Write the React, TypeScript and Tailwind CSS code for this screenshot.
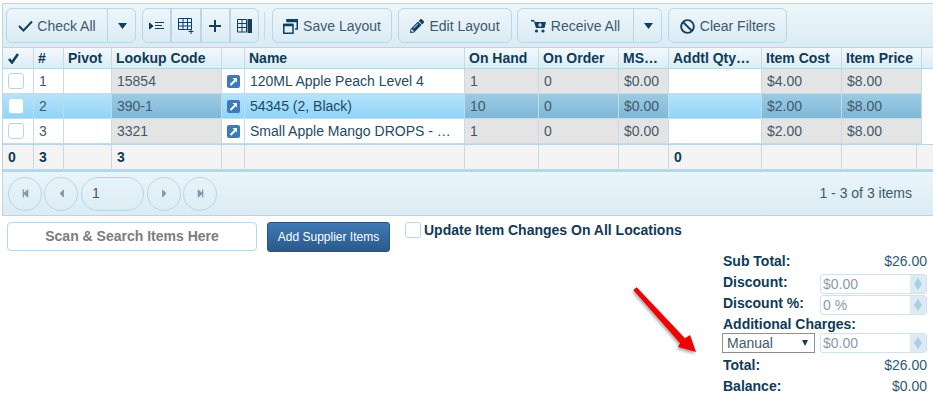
import React from "react";
import { FaPencilAlt, FaBan, FaStepBackward, FaStepForward, FaCaretLeft, FaCaretRight } from "react-icons/fa";

const cols = "grid-cols-[31px_30px_48px_110px_23px_220px_74px_80px_50px_93px_80px_80px_1fr]";
const grayIdx = [3, 6, 7, 8, 10, 11];

const rows = [
  { c: ["", "1", "", "15854", "", "120ML Apple Peach Level 4", "1", "0", "$0.00", "", "$4.00", "$8.00"], sel: false },
  { c: ["", "2", "", "390-1", "", "54345 (2, Black)", "10", "0", "$0.00", "", "$2.00", "$8.00"], sel: true },
  { c: ["", "3", "", "3321", "", "Small Apple Mango DROPS - …", "1", "0", "$0.00", "", "$2.00", "$8.00"], sel: false },
];

const headers = ["", "#", "Pivot", "Lookup Code", "", "Name", "On Hand", "On Order", "MS…", "Addtl Qty…", "Item Cost", "Item Price"];

function BarBtn({ children, className = "" }: { children: React.ReactNode; className?: string }) {
  return (
    <div className={`h-[35px] flex items-center justify-center gap-[5px] border border-[#b5d7e8] bg-gradient-to-b from-[#edf6fb] to-[#dcebf4] rounded-[6px] text-[#3d5a6c] ${className}`}>
      {children}
    </div>
  );
}

function Caret() {
  return (
    <svg width="9" height="6" viewBox="0 0 9 6"><path d="M0 0 H9 L4.5 6 Z" fill="#123f5d" /></svg>
  );
}

function LinkIcon() {
  return (
    <svg width="13" height="13" viewBox="0 0 13 13">
      <rect width="13" height="13" rx="2" fill="#3f7ab8" />
      <path d="M3.5 10 L8 5.5" stroke="#fff" strokeWidth="2" />
      <path d="M5.5 3 H10 V7.5 Z" fill="#fff" />
    </svg>
  );
}

function Spin({ value }: { value: string }) {
  return (
    <div className="w-[107px] h-[20px] flex border border-[#cfe3ee] rounded-[3px] bg-white font-normal">
      <div className="flex-1 pl-[2px] leading-[18px] text-[#8b9ba6]">{value}</div>
      <div className="w-[16px] bg-[#dcebf4] flex items-center justify-center">
        <svg width="8" height="12" viewBox="0 0 8 12"><path d="M4 0 L8 6 L4 12 L0 6 Z" fill="#a9cfe3" /></svg>
      </div>
    </div>
  );
}

function Pager({ children, wide }: { children: React.ReactNode; wide?: boolean }) {
  return (
    <div className={`h-[34px] rounded-[17px] border border-[#b5d7e8] flex items-center ${wide ? "w-[63px] mx-[1px] justify-start pl-[10px] text-[#3d5a6c]" : "w-[34px] justify-center text-[#7f9bab]"}`}>
      {children}
    </div>
  );
}

function SumRow({ label, value, cls }: { label: string; value: string; cls: string }) {
  return (
    <div className={`flex justify-between font-bold pl-[1px] ${cls}`}>
      <span className="text-[#0f3b58]">{label}</span>
      <span className="font-normal text-[#2f5a73]">{value}</span>
    </div>
  );
}

export default function App() {
  return (
    <div className="relative w-[933px] h-[402px] overflow-hidden bg-white text-[14px] font-['Liberation_Sans',Arial,sans-serif] text-[#3d5a6c]">
      <div className="ml-[2px] mt-[3px] w-[931px] border border-[#b5d7e8] border-r-0">
        <div className="h-[44px] pt-[4px] pl-[3px] flex bg-gradient-to-b from-[#ecf6fb] to-[#dcebf4] border-b border-[#b5d7e8]">
          <BarBtn className="w-[130px] !justify-start">
            <div className="w-[101px] h-full pt-[1px] flex items-center justify-center gap-[4px] border-r border-[#b5d7e8]">
              <svg width="15" height="12" viewBox="0 0 15 12" fill="none" stroke="#123f5d" strokeWidth="2">
                <path d="M1 6 L5.5 10.5 L14 1.5" />
              </svg>
              <span>Check All</span>
            </div>
            <div className="flex-1 flex justify-center -ml-[3px]"><Caret /></div>
          </BarBtn>
          <BarBtn className="ml-[6px] w-[117px] !gap-0 overflow-hidden">
            <div className="flex-1 h-full flex items-center justify-center border-r-2 border-[#b5d7e8]">
              <svg width="16" height="12" viewBox="0 0 16 12" fill="none" stroke="#123f5d" strokeWidth="1">
                <path d="M0.5 3 L4 6 L0.5 9 Z" fill="#123f5d" />
                <path d="M6 2.5 H15 M6 5.5 H13 M6 8.5 H15" />
              </svg>
            </div>
            <div className="flex-1 h-full flex items-center justify-center border-r-2 border-[#b5d7e8]">
              <svg width="16" height="16" viewBox="0 0 16 16" fill="none" stroke="#123f5d" strokeWidth="1">
                <path d="M0.5 0.5 H13.5 V11.5 H0.5 Z M0.5 4.5 H13.5 M0.5 8 H13.5 M5 0.5 V11.5 M9.5 0.5 V11.5" />
                <path d="M13 11 V16 M10.5 13.5 H15.5" />
              </svg>
            </div>
            <div className="flex-1 h-full flex items-center justify-center border-r-2 border-[#b5d7e8]">
              <svg width="12" height="12" viewBox="0 0 12 12"><path d="M5 0 H7 V5 H12 V7 H7 V12 H5 V7 H0 V5 H5 Z" fill="#123f5d" /></svg>
            </div>
            <div className="flex-1 h-full flex items-center justify-center">
              <svg width="15" height="14" viewBox="0 0 15 14" fill="none" stroke="#123f5d" strokeWidth="1">
                <path d="M0.5 0.5 H9.5 V13 H0.5 Z M0.5 4.5 H9.5 M0.5 8.5 H9.5 M5 0.5 V13" />
                <rect x="10.5" y="0" width="4.5" height="14" fill="#123f5d" stroke="none" />
              </svg>
            </div>
          </BarBtn>
          <div className="ml-[5px] mt-[4px] w-px h-[27px] bg-[#c6dde9]" />
          <BarBtn className="ml-[7px] w-[120px] pt-[1px]">
            <svg width="15" height="15" viewBox="0 0 15 15" fill="none" stroke="#123f5d" strokeWidth="1.5">
              <path d="M0.75 5.5 H10 V14.25 H0.75 Z" />
              <path d="M4 3 V0.75 H14.25 V10 H12" />
              <path d="M0.75 6 H10" strokeWidth="2.5" />
              <path d="M4 2 H14.25" strokeWidth="2.5" />
            </svg>
            <span>Save Layout</span>
          </BarBtn>
          <BarBtn className="ml-[6px] w-[114px] pt-[1px]">
            <FaPencilAlt className="text-[#123f5d] text-[14px]" />
            <span>Edit Layout</span>
          </BarBtn>
          <BarBtn className="ml-[5px] w-[145px] !justify-start">
            <div className="w-[116px] h-full pt-[1px] flex items-center justify-center gap-[5px] border-r border-[#b5d7e8]">
              <svg width="15" height="14" viewBox="0 0 15 14">
                <path d="M0 1 H3 L4 3 H15 L13.5 9 H5 L3 2.5 H0 Z" fill="#123f5d" />
                <circle cx="5.5" cy="12" r="1.6" fill="#123f5d" />
                <circle cx="12" cy="12" r="1.6" fill="#123f5d" />
                <path d="M9 4 V8 M7 6 H11" stroke="#edf6fb" strokeWidth="1.2" />
              </svg>
              <span>Receive All</span>
            </div>
            <div className="flex-1 flex justify-center -ml-[3px]"><Caret /></div>
          </BarBtn>
          <BarBtn className="ml-[6px] w-[119px] pt-[1px]">
            <FaBan className="text-[#123f5d] text-[15px]" />
            <span>Clear Filters</span>
          </BarBtn>
        </div>

        <div className={`grid ${cols} h-[21px] bg-gradient-to-b from-[#f3f9fc] to-[#dcecf5] border-b border-[#b5d7e8]`}>
          {headers.map((h, i) => (
            <div key={i} className="border-r border-[#c3dcea] pl-[4px] font-bold text-[#0f3b58] leading-[20px] whitespace-nowrap overflow-hidden">
              {i === 0 ? (
                <svg className="mt-[5px] ml-[1px]" width="11" height="11" viewBox="0 0 11 11" fill="none" stroke="#123f5d" strokeWidth="2.6">
                  <path d="M1 6 L4 9.5 L10 1" />
                </svg>
              ) : (
                h
              )}
            </div>
          ))}
          <div />
        </div>

        {rows.map((r, ri) => (
          <div key={ri} className={`grid ${cols} h-[25px] ${r.sel ? "bg-gradient-to-b from-[#b5e3fa] to-[#8ed4f8]" : "bg-white"}`}>
            {r.c.map((v, i) => {
              const gray = grayIdx.includes(i);
              const bg = gray ? (r.sel ? "bg-gradient-to-b from-[#9ccbe3] to-[#7fb8d8]" : "bg-[#e4e4e4]") : "";
              return (
                <div key={i} className={`relative border-r border-[#c3dcea] border-b pl-[5px] leading-[24px] whitespace-nowrap overflow-hidden ${i === 5 ? "text-[#1e4a66]" : "text-[#44586a]"} ${bg}`}>
                  {i === 0 && (
                    <div className="absolute left-[5px] top-[4px] w-[16px] h-[16px] rounded-[3px] border border-[#b5d7e8] bg-white" />
                  )}
                  {i === 4 && (
                    <div className="h-full flex items-center justify-center pr-[4px] -ml-[1px]">
                      <LinkIcon />
                    </div>
                  )}
                  {v}
                </div>
              );
            })}
            <div className="bg-white" />
          </div>
        ))}

        <div className={`grid ${cols} h-[27px] bg-[#f4f4f4] border-t border-[#b5d7e8] border-b-2`}>
          {["0", "3", "", "3", "", "", "", "", "", "0", ""].map((v, i) => (
            <div key={i} className="border-r border-[#c3dcea] pl-[5px] font-bold text-[#0f3b58] leading-[25px]">{v}</div>
          ))}
          <div className="w-[75px] border-r border-[#c3dcea]" />
          <div />
        </div>

        <div className="h-[44px] pl-[5px] pr-[5px] flex items-center justify-between bg-gradient-to-b from-[#eaf5fb] to-[#dcebf4] border-t border-[#b5d7e8]">
          <div className="flex gap-[2px]">
            <Pager><FaStepBackward className="text-[9px]" /></Pager>
            <Pager><FaCaretLeft className="text-[13px]" /></Pager>
            <Pager wide>1</Pager>
            <Pager><FaCaretRight className="text-[13px]" /></Pager>
            <Pager><FaStepForward className="text-[9px]" /></Pager>
          </div>
          <div className="pr-[16px] text-[#3d5a6c]">1 - 3 of 3 items</div>
        </div>
      </div>

      <div className="flex pl-[7px] pt-[6px] h-[30px] items-start">
        <div className="w-[250px] h-[29px] shrink-0 rounded-[4px] border border-[#b5d7e8] flex items-center justify-center font-bold text-[#7c7c7c]">
          Scan &amp; Search Items Here
        </div>
        <div className="ml-[10px] w-[123px] h-[30px] shrink-0 rounded-[3px] border border-[#28557f] bg-gradient-to-b from-[#3f7ab5] to-[#2a5a8c] text-white text-[12px] flex items-center justify-center">
          Add Supplier Items
        </div>
        <div className="ml-[15px] w-[16px] h-[16px] shrink-0 rounded-[3px] border border-[#b5d7e8]" />
        <div className="ml-[3px] -mt-[1px] font-bold text-[#0f3b58] leading-[18px]">Update Item Changes On All Locations</div>
      </div>

      <div className="ml-[722px] w-[205px] mt-[5px]">
        <SumRow label="Sub Total:" value="$26.00" cls="h-[22px] leading-[21px]" />
        <div className="flex justify-between h-[21px] items-center font-bold">
          <span className="text-[#0f3b58] pl-[1px] -mt-[3px]">Discount:</span>
          <Spin value="$0.00" />
        </div>
        <div className="flex justify-between h-[21px] items-center font-bold">
          <span className="text-[#0f3b58] pl-[1px] -mt-[3px]">Discount %:</span>
          <Spin value="0 %" />
        </div>
        <div className="font-bold text-[#0f3b58] h-[17px] leading-[18px] pl-[1px]">Additional Charges:</div>
        <div className="flex justify-between h-[21px] items-center">
          <div className="w-[93px] h-[20px] border border-[#8f8f8f] flex items-center justify-between pl-[4px] pr-[6px] pt-[1px] text-[#3f5a6e]">
            <span>Manual</span>
            <span className="w-0 h-0 border-x-[3.5px] border-x-transparent border-t-[6px] border-t-[#123f5d]" />
          </div>
          <Spin value="$0.00" />
        </div>
        <SumRow label="Total:" value="$26.00" cls="h-[22px] leading-[25px]" />
        <SumRow label="Balance:" value="$0.00" cls="h-[21px] leading-[23px]" />
      </div>

      <svg className="absolute left-[628px] top-[282px]" width="80" height="80" viewBox="0 0 80 80">
        <defs>
          <filter id="s" x="-30%" y="-30%" width="160%" height="160%">
            <feDropShadow dx="-1" dy="2" stdDeviation="1.5" floodColor="#000" floodOpacity="0.35" />
          </filter>
        </defs>
        <path d="M5.3 8 L8.7 5.3 L57 56.3 L62 53 L68 70 L50 65 L52 61.3 Z" fill="#f00000" filter="url(#s)" />
      </svg>
    </div>
  );
}
